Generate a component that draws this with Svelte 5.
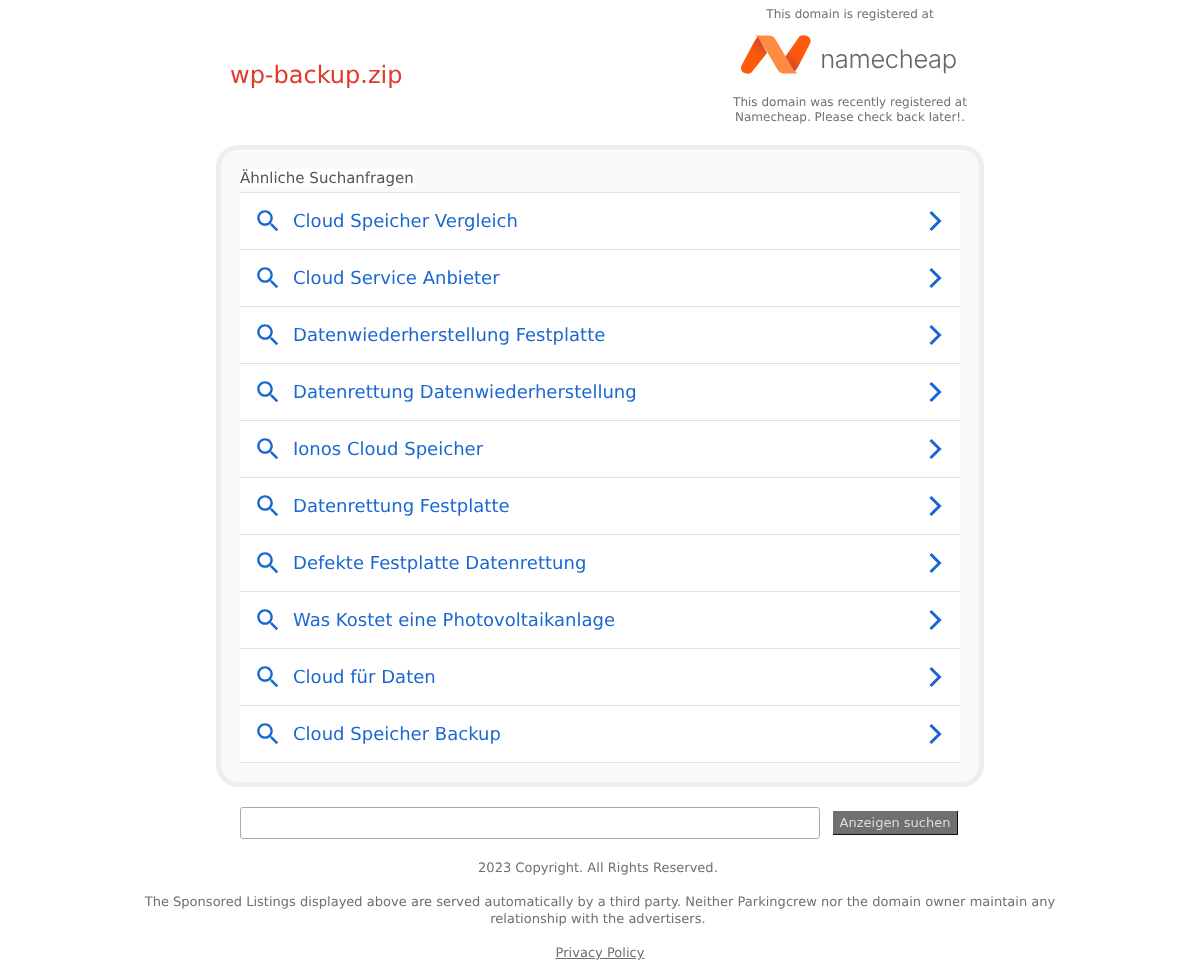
<script>
    const terms = [
        'Cloud Speicher Vergleich',
        'Cloud Service Anbieter',
        'Datenwiederherstellung Festplatte',
        'Datenrettung Datenwiederherstellung',
        'Ionos Cloud Speicher',
        'Datenrettung Festplatte',
        'Defekte Festplatte Datenrettung',
        'Was Kostet eine Photovoltaikanlage',
        'Cloud für Daten',
        'Cloud Speicher Backup'
    ];
</script>

<style>
    :global(body) {
        background: #fff;
        font-family: "DejaVu Sans", sans-serif;
        text-rendering: geometricPrecision;
    }

    .page {
        will-change: transform;
    }

    .header {
        display: flex;
        justify-content: space-between;
        align-items: flex-start;
        width: 770px;
        height: 145px;
        margin: 0 auto;
    }

    .domain {
        margin: 60px 0 0 15px;
        font-size: 24px;
        line-height: 30px;
        font-weight: 400;
        color: #e3392a;
    }

    .registrar {
        width: 270px;
        padding-top: 7px;
        text-align: center;
        font-size: 12px;
        line-height: 15px;
        color: #707070;
    }

    .registrar p {
        margin: 0;
    }

    .logo {
        display: flex;
        justify-content: center;
        align-items: flex-start;
        gap: 8px;
        height: 73px;
        padding: 13px 3px 0 0;
        box-sizing: border-box;
    }

    .wordmark {
        font-family: Inter, sans-serif;
        font-weight: 300;
        font-size: 25.5px;
        line-height: 50px;
        letter-spacing: -0.35px;
        color: #666;
    }

    .panel {
        box-sizing: border-box;
        width: 768px;
        height: 642px;
        margin: 0 auto;
        padding: 18px 19px 0;
        background: #fafafa;
        border: 5px solid #eeeeee;
        border-radius: 22px;
    }

    .panel h2 {
        margin: 0;
        height: 24px;
        font-size: 15px;
        font-weight: 400;
        line-height: 20px;
        color: #555;
    }

    .panel h2 span {
        background: #fff;
    }

    .list {
        border-top: 1px solid #e0e0e0;
    }

    .row {
        display: flex;
        align-items: center;
        height: 56px;
        padding: 0 16px;
        background: #fff;
        border-bottom: 1px solid #e0e0e0;
        color: #1a67d2;
        font-size: 18px;
        letter-spacing: 0.02px;
        text-decoration: none;
    }

    .label {
        flex: 1;
        margin-left: 13px;
    }

    .search {
        display: flex;
        justify-content: center;
        align-items: center;
        gap: 13px;
        margin-top: 20px;
    }

    .search input {
        box-sizing: border-box;
        width: 580px;
        height: 32px;
        padding: 0 6px;
        background: #fff;
        border: 1px solid #a9a9a9;
        border-radius: 3px;
    }

    .search button {
        box-sizing: border-box;
        width: 125px;
        height: 24px;
        padding: 0;
        margin-right: 2px;
        background: #707070;
        border: 0;
        border-right: 1px solid #111;
        border-bottom: 1px solid #111;
        color: #ddd;
        font-family: inherit;
        font-size: 13px;
    }

    .footer {
        margin: 21px auto 0;
        width: 920px;
        text-align: center;
        font-size: 13px;
        line-height: 17px;
        letter-spacing: 0.02px;
        color: #707070;
    }

    .footer p {
        margin: 0 0 17px;
    }

    .footer a {
        color: #707070;
    }
</style>

<div class="page">
    <div class="header">
        <h1 class="domain">wp-backup.zip</h1>
        <div class="registrar">
            <p>This domain is registered at</p>
            <div class="logo">
                <svg width="72" height="40" viewBox="0 0 72 40">
                    <defs>
                        <linearGradient id="leftBand" x1="0" y1="1" x2="0.6" y2="0">
                            <stop offset="0" stop-color="#ff5c0a" />
                            <stop offset="0.65" stop-color="#f9590c" />
                            <stop offset="1" stop-color="#d2452a" />
                        </linearGradient>
                        <linearGradient id="rightBand" x1="1" y1="0" x2="0.4" y2="1">
                            <stop offset="0" stop-color="#ff5c0a" />
                            <stop offset="0.65" stop-color="#f9590c" />
                            <stop offset="1" stop-color="#d2452a" />
                        </linearGradient>
                    </defs>
                    <path d="M6.5 38.5 A5.5 5.5 0 0 1 1.7 30.3 L14 7 L18 1 L27 18 L13 35.5 A6 6 0 0 1 6.5 38.5Z" fill="url(#leftBand)" />
                    <path d="M65 .5 A5.5 5.5 0 0 1 70 8.5 L58 32 L54 38 L45 22 L58 3.5 A6 6 0 0 1 65 .5Z" fill="url(#rightBand)" />
                    <path d="M15 .5 H29 C32 .5 34 2 35.5 4.5 L53 34 C54 36 56 38 58 38.5 H44 C41 38.5 39 37 37.5 34.5 L20 5 C19 3 17 1 15 .5Z" fill="#ff8a42" />
                </svg>
                <span class="wordmark">namecheap</span>
            </div>
            <p>This domain was recently registered at<br />Namecheap. Please check back later!.</p>
        </div>
    </div>

    <div class="panel">
        <h2><span>Ähnliche Suchanfragen</span></h2>
        <div class="list">
            {#each terms as term}
                <a class="row" href="#top">
                    <svg width="24" height="24" viewBox="2 2 20 20" fill="#1a67d2">
                        <path d="M15.5 14h-.79l-.28-.27C15.41 12.59 16 11.11 16 9.5 16 5.91 13.09 3 9.5 3S3 5.91 3 9.5 5.91 16 9.5 16c1.61 0 3.09-.59 4.23-1.57l.27.28v.79l5 4.99L20.49 19l-4.99-5zm-6 0C7.01 14 5 11.99 5 9.5S7.01 5 9.5 5 14 7.01 14 9.5 11.99 14 9.5 14z" />
                    </svg>
                    <span class="label">{term}</span>
                    <svg class="chevron" width="16" height="24" viewBox="0 0 16 24" fill="none" stroke="#1a67d2" stroke-width="3">
                        <path d="M2.5 3 L11.5 12 L2.5 21" />
                    </svg>
                </a>
            {/each}
        </div>
    </div>

    <div class="search">
        <input type="text" />
        <button>Anzeigen suchen</button>
    </div>

    <div class="footer">
        <p>2023 Copyright. All Rights Reserved.&nbsp;</p>
        <p>The Sponsored Listings displayed above are served automatically by a third party. Neither Parkingcrew nor the domain owner maintain any relationship with the advertisers.&nbsp;</p>
        <a href="#top">Privacy Policy</a>
    </div>
</div>
